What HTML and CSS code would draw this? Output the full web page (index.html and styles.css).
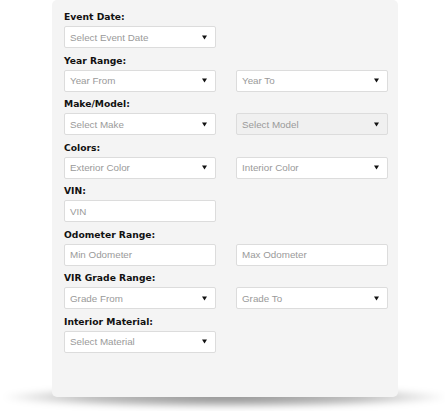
FILE: index.html
```html
<!DOCTYPE html>
<html>
<head>
<meta charset="utf-8">
<link rel="stylesheet" href="styles.css">
</head>
<body>
<div class="stage">
  <div class="shadow"></div>
  <form class="panel">
    <div class="group">
      <div class="label">Event Date:</div>
      <div class="row">
        <div class="field select"><span>Select Event Date</span><svg class="arrow" viewBox="0 0 6 5" width="6" height="5"><polygon points="0,0 6,0 3,5"/></svg></div>
      </div>
    </div>
    <div class="group">
      <div class="label">Year Range:</div>
      <div class="row">
        <div class="field select"><span>Year From</span><svg class="arrow" viewBox="0 0 6 5" width="6" height="5"><polygon points="0,0 6,0 3,5"/></svg></div>
        <div class="field select"><span>Year To</span><svg class="arrow" viewBox="0 0 6 5" width="6" height="5"><polygon points="0,0 6,0 3,5"/></svg></div>
      </div>
    </div>
    <div class="group">
      <div class="label">Make/Model:</div>
      <div class="row">
        <div class="field select"><span>Select Make</span><svg class="arrow" viewBox="0 0 6 5" width="6" height="5"><polygon points="0,0 6,0 3,5"/></svg></div>
        <div class="field select disabled"><span>Select Model</span><svg class="arrow" viewBox="0 0 6 5" width="6" height="5"><polygon points="0,0 6,0 3,5"/></svg></div>
      </div>
    </div>
    <div class="group">
      <div class="label">Colors:</div>
      <div class="row">
        <div class="field select"><span>Exterior Color</span><svg class="arrow" viewBox="0 0 6 5" width="6" height="5"><polygon points="0,0 6,0 3,5"/></svg></div>
        <div class="field select"><span>Interior Color</span><svg class="arrow" viewBox="0 0 6 5" width="6" height="5"><polygon points="0,0 6,0 3,5"/></svg></div>
      </div>
    </div>
    <div class="group">
      <div class="label">VIN:</div>
      <div class="row">
        <div class="field"><span>VIN</span></div>
      </div>
    </div>
    <div class="group">
      <div class="label">Odometer Range:</div>
      <div class="row">
        <div class="field"><span>Min Odometer</span></div>
        <div class="field"><span>Max Odometer</span></div>
      </div>
    </div>
    <div class="group">
      <div class="label">VIR Grade Range:</div>
      <div class="row">
        <div class="field select"><span>Grade From</span><svg class="arrow" viewBox="0 0 6 5" width="6" height="5"><polygon points="0,0 6,0 3,5"/></svg></div>
        <div class="field select"><span>Grade To</span><svg class="arrow" viewBox="0 0 6 5" width="6" height="5"><polygon points="0,0 6,0 3,5"/></svg></div>
      </div>
    </div>
    <div class="group">
      <div class="label">Interior Material:</div>
      <div class="row">
        <div class="field select"><span>Select Material</span><svg class="arrow" viewBox="0 0 6 5" width="6" height="5"><polygon points="0,0 6,0 3,5"/></svg></div>
      </div>
    </div>
  </form>
</div>
</body>
</html>
```

FILE: styles.css
```css
html, body {
  margin: 0;
  padding: 0;
  background: #ffffff;
}

body {
  min-height: 411px;
}

.stage {
  position: relative;
  width: 346px;
  margin-left: 52px;
  padding-bottom: 14px;
}

.shadow {
  position: absolute;
  left: -48px;
  right: -48px;
  top: 386px;
  height: 22px;
  border-radius: 50%;
  background: radial-gradient(ellipse at center, rgba(0,0,0,0.45) 0%, rgba(0,0,0,0.26) 45%, rgba(0,0,0,0) 72%);
  filter: blur(3px);
  z-index: 0;
}

.panel {
  position: relative;
  z-index: 1;
  box-sizing: border-box;
  height: 397px;
  margin: 0;
  padding: 10px 10px 0 12px;
  background: #f4f4f4;
  border-radius: 5px;
  display: flex;
  flex-direction: column;
  gap: 5.5px;
}

.label {
  font-family: "DejaVu Sans", Verdana, sans-serif;
  font-weight: bold;
  font-size: 9.2px;
  line-height: 14px;
  color: #111;
  margin-bottom: 2px;
}

.row {
  display: flex;
  gap: 20px;
}

.field {
  box-sizing: border-box;
  width: 152px;
  height: 22px;
  background: #ffffff;
  border: 1px solid #dcdcdc;
  border-radius: 2px;
  display: flex;
  align-items: center;
  justify-content: space-between;
  padding: 0 8px 0 5px;
  font-family: "Liberation Sans", Arial, sans-serif;
  font-size: 9.8px;
  color: #9a9a9a;
}

.field.disabled {
  background: #f0f0f0;
}

.arrow {
  display: block;
  fill: #111;
  width: 5px;
  height: 5px;
}
```
